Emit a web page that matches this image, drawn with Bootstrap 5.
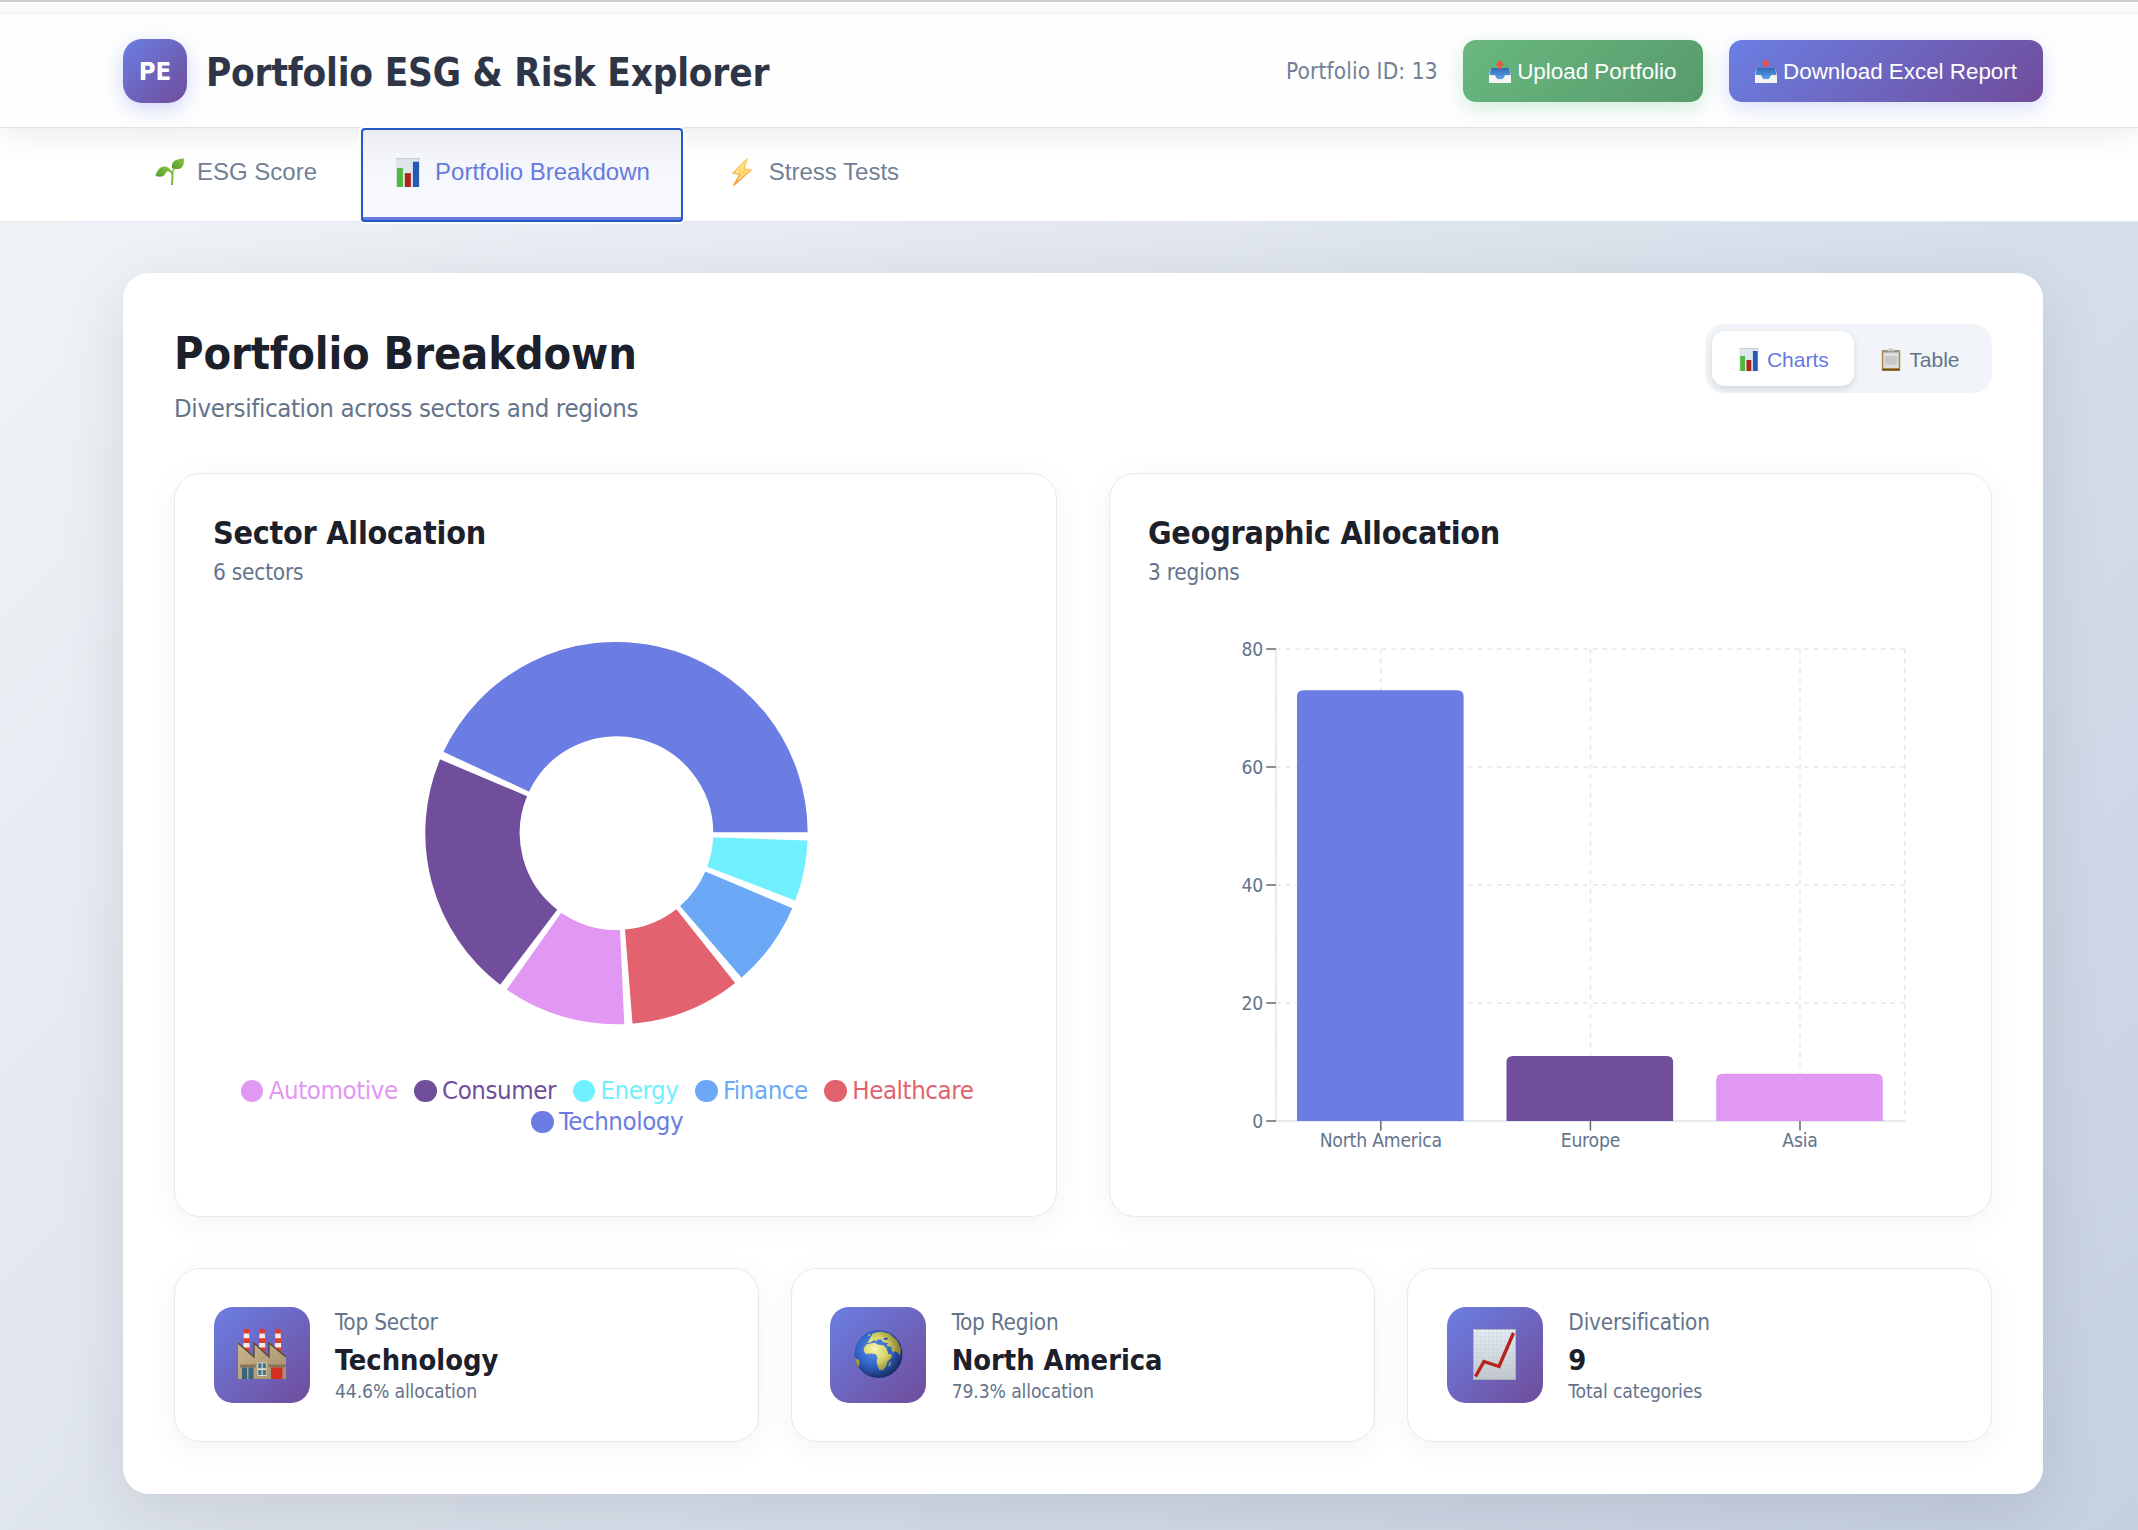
<!DOCTYPE html>
<html lang="en">
<head>
<meta charset="utf-8">
<meta name="viewport" content="width=device-width, initial-scale=1">
<title>Portfolio ESG &amp; Risk Explorer</title>
<link rel="stylesheet" href="https://cdn.jsdelivr.net/npm/bootstrap@5.3.0/dist/css/bootstrap.min.css">
<style>
  body{font-family:"DejaVu Sans Condensed","DejaVu Sans",sans-serif;font-stretch:condensed;letter-spacing:-.013em;color:#1b202b;min-height:1530px;background:linear-gradient(135deg,#f3f5f8 0%,#c5d0e1 100%);overflow:hidden}
  .shell{width:1920px;margin-left:123px}
  .edge-strip{height:15px;border-top:2px solid #ccc;background:linear-gradient(#fcfcfc,#f6f6f6)}
  .app-header{height:113px;background:#fefefe;border-bottom:1px solid #e0e2e4;box-shadow:0 3px 32px rgba(0,0,0,.1);clip-path:inset(0 0 -50px 0);position:relative;z-index:2}
  .logo-box{width:64px;height:64px;border-radius:19px;background:linear-gradient(135deg,#6b7fe3,#704c9a);color:#fff;font-size:25.6px;font-weight:700;letter-spacing:0;padding-top:1px;box-shadow:0 6px 20px rgba(102,126,234,.3)}
  .app-title{font-size:38.4px;line-height:46px;font-weight:700;color:#2d3546;letter-spacing:-.0055em;padding-top:3px;margin-left:19px}
  .pid{font-size:22.4px;color:#718096;letter-spacing:.006em;padding-top:1px}
  .ui,.btn{font-family:"Liberation Sans",Arial,sans-serif;letter-spacing:0}
  .act-btn{height:62px;border:0;border-radius:13px;padding:1px 26px 0 25px;font-size:22.4px;color:#fff;gap:5.5px;margin-left:26px}
  .act-btn:first-of-type{margin-left:25px}
  .btn-up{background:linear-gradient(135deg,#6ab880,#579b6b);box-shadow:0 6px 19px rgba(72,187,120,.25)}
  .btn-down{background:linear-gradient(135deg,#6b7fe3,#704c9a);box-shadow:0 6px 19px rgba(102,126,234,.25)}
  .tabs-bar{height:94px;background:#fff;border-bottom:1px solid #e2e6ec}
  .tab-btn{height:93px;padding:0 32px 5px;gap:12px;font-size:24px;color:#718096;margin-right:12px}
  .tab-btn.active{height:94px;padding:0 33px 1px 32px;color:#667ae0;background:linear-gradient(#ebecf2,#f4f5fb 30%,#f7f8fd 60%);border-bottom:5px solid #667ae0;border-radius:4px;outline:2.5px solid #2559c5;outline-offset:-2px;box-shadow:0 0 0 2px #fff;position:relative;z-index:3}
  .panel{margin-top:51px;height:1221px;border-radius:26px;background:#fff;padding:51px;box-shadow:0 16px 64px rgba(0,0,0,.1)}
  .panel-top{height:149px}
  .panel-top h2{font-size:44.8px;line-height:59px;font-weight:700;margin:0 0 6px;letter-spacing:-.003em}
  .panel-top p{font-size:25.6px;line-height:38.4px;color:#64748b;margin:0;letter-spacing:-.0145em}
  .toggle-box{height:69px;padding:7px;border-radius:19px;background:#f1f5f9}
  .toggle-box .btn{height:55px;border:0;border-radius:13px;padding:2px 25.5px 0 27px;font-size:21px;color:#64748b;gap:8px}
  .toggle-box .btn.active{background:#fff;color:#667ae6;box-shadow:0 3px 7px rgba(0,0,0,.12)}
  .soft-card{border:1px solid #e5e9f1;border-radius:26px;background:#fff;box-shadow:0 6px 32px rgba(0,0,0,.05)}
  .chart-card{width:883px;height:744px;padding:38px}
  .chart-card h3{font-size:32px;line-height:43px;font-weight:700;margin:0 0 1px;letter-spacing:-.008em}
  .chart-card p{font-size:22.4px;line-height:32px;color:#64748b;margin:0}
  .chart-card svg.plot{display:block;width:805px}
  .legend-row{font-size:25.6px;line-height:30.7px;letter-spacing:-.0165em}
  .legend-row span{margin-right:16.6px}
  .legend-row i{width:22.4px;height:22.4px;border-radius:50%;background:currentColor;margin-right:5.4px;margin-top:5px}
  .stats{margin-top:51px;gap:32px}
  .stat-card{flex:1 1 0;height:174px;padding:38px 38.500px}
  .stat-icon{width:96px;height:96px;border-radius:19px;background:linear-gradient(135deg,#6b7fe3,#704c9a);margin-right:25.5px}
  .stat-icon svg{margin:-2px 0 0 0}
  .stat-copy{margin-top:-3px}
  .stat-copy div:nth-child(1){font-size:22.4px;line-height:36px;color:#64748b}
  .stat-copy div:nth-child(2){font-size:28.8px;line-height:40px;font-weight:700;letter-spacing:-.001em}
  .stat-copy div:nth-child(3){font-size:19.2px;line-height:24px;color:#64748b;letter-spacing:-.007em}
  .axis{font-size:19.2px;fill:#64748b}
</style>
<script src="https://cdn.jsdelivr.net/npm/bootstrap@5.3.0/dist/js/bootstrap.bundle.min.js"></script>
</head>
<body>
<svg width="0" height="0" class="position-absolute">
  <defs>
    <linearGradient id="paper" x1="0" y1="0" x2="0" y2="1"><stop offset="0" stop-color="#e6eef8"/><stop offset="1" stop-color="#c3c9cd"/></linearGradient>
    <linearGradient id="leaf" x1="0" y1="1" x2="1" y2="0"><stop offset="0" stop-color="#4f9a2f"/><stop offset="1" stop-color="#8cc63f"/></linearGradient>
    <linearGradient id="trayblue" x1="0" y1="0" x2="0" y2="1"><stop offset="0" stop-color="#3169b5"/><stop offset="1" stop-color="#5da4ee"/></linearGradient>
    <linearGradient id="wall" x1="0" y1="0" x2="1" y2="1"><stop offset="0" stop-color="#cdb68b"/><stop offset="1" stop-color="#a38f70"/></linearGradient>
    <radialGradient id="sea" cx=".4" cy=".4" r=".62"><stop offset="0" stop-color="#5c95e6"/><stop offset=".6" stop-color="#2d5fc3"/><stop offset="1" stop-color="#1b2c66"/></radialGradient>
    <radialGradient id="land" gradientUnits="userSpaceOnUse" cx="21" cy="20" r="28"><stop offset="0" stop-color="#f6f7b4"/><stop offset=".5" stop-color="#d3cf62"/><stop offset="1" stop-color="#766f2e"/></radialGradient>
    <linearGradient id="bolt" x1="0" y1="0" x2="0" y2="1"><stop offset="0" stop-color="#ffd65b"/><stop offset="1" stop-color="#f49b3c"/></linearGradient>
    <symbol id="i-bars" viewBox="0 0 19 23"><path fill="#dde5ed" d="M0 0h19v23H0z"/><path fill="#c7d2d8" d="M0 0h19v1H0z"/><path fill="#52b83c" d="M.7 8h4.8v15H.7z"/><path fill="#ae251e" d="M7 12h4.8v11H7z"/><path fill="#2459b8" d="M13.4 3h4.8v20h-4.8z"/></symbol>
    <symbol id="i-tray-up" viewBox="0 0 24 24"><path fill="#e9e9e7" d="M1 14.500 3 8h18l2 6.500V23H1z"/><path fill="url(#trayblue)" d="M3 8h18l1.600 7h-5l-2.500 4h-6l-2.500-4h-5z"/><path fill="#f5f5f3" d="M1 15.500h6L9.500 20h5l2.500-4.500h6V23H1z"/><path fill="#e95244" d="m12 0 4.500 5.200h-2.800V9h-3.400V5.200H7.500z"/></symbol>
    <symbol id="i-tray-down" viewBox="0 0 24 24"><path fill="#e9e9e7" d="M1 14.500 3 8h18l2 6.500V23H1z"/><path fill="url(#trayblue)" d="M3 8h18l1.600 7h-5l-2.500 4h-6l-2.500-4h-5z"/><path fill="#f5f5f3" d="M1 15.500h6L9.500 20h5l2.500-4.500h6V23H1z"/><path fill="#e95244" d="M9.500 0h5l-.6 3H16l-4 5-4-5h2.100z"/></symbol>
    <symbol id="i-seed" viewBox="0 0 30 28"><path fill="none" stroke="#7fb53a" stroke-width="2" d="M13 12q5 1 4.500 7t-.5 8"/><path fill="none" stroke="#7fb53a" stroke-width="1.500" d="M17.500 16q0-4 3-7"/><path fill="url(#leaf)" d="M.5 18Q3 8 10 8.500q5 .5 5.500 5Q12 12 10 16T.5 18Z"/><path fill="url(#leaf)" d="M17 10q-1-6 4-8t8-1.500q.5 10-5.500 10.500-4 .3-6.500-1Z"/></symbol>
    <symbol id="i-bolt" viewBox="0 0 20 28"><path fill="#fff3b5" stroke="url(#bolt)" stroke-width="1.600" stroke-linejoin="round" d="M15 1 1.200 15.200l7 .8L2 27 18.800 12.200l-7-1.200Z"/><path fill="#ffd65b" d="M13 5 5 14l5 1-3 6 8.500-8-6-1z"/></symbol>
    <symbol id="i-clip" viewBox="0 0 19 23"><rect x=".3" y="2" width="18.400" height="21" rx="1.400" fill="#ad8540"/><path fill="#71542a" d="M.5 21h18v1.500h-18z"/><path fill="#dedede" d="M1.800 3.500h15.400V20H1.800z"/><path fill="#c8c8c8" d="M3.500 8h11.800v8.500H3.500z"/><path fill="#8e9092" d="M2.500 2.300h14v2.200h-14z"/><path fill="#c4c9cc" d="M6 1.800 9.500 0 13 1.800v1.400H6z"/></symbol>
    <symbol id="i-factory" viewBox="0 0 48 50">
      <g id="stacks"><path fill="#e5392c" d="M6 0h5l.8 22H5.200z"/><path fill="#f0ece8" d="M5.800 4.500h5.400l.2 4.700H5.600zM5.400 14h6.100l.2 4.500H5.300z"/></g>
      <use href="#stacks" x="15.700"/><use href="#stacks" x="31.500"/>
      <path fill="url(#wall)" d="M0 14 16 28V14l15 14V14l17 14v22H0z"/>
      <path fill="none" stroke="#5c4a39" stroke-width="1.400" d="m0 14 16 14V14l15 14V14l17 14"/>
      <path fill="#87765a" d="M2 35.500h16v3H2zM30.500 35.500h17v3h-17z"/><path fill="#39657f" d="M4 38.500h5V50H4zM10.500 38.500h5V50h-5z"/>
      <path fill="#e8dfc6" d="M19.500 33.500h9V47h-9z"/><path fill="#3d718d" d="M20.300 34.300h3.200v5h-3.200zM24.700 34.300h3.200v5h-3.200zM20.300 41h3.200v5h-3.200zM24.700 41h3.200v5h-3.200z"/><path fill="#d32f25" d="M33 38.500h11.500V50H33z"/>
    </symbol>
    <symbol id="i-globe" viewBox="0 0 50 50"><circle cx="25" cy="25" r="24.500" fill="url(#sea)"/><g fill="url(#land)"><path d="m10 19 3-4 8-1.500 4 2 5 .5 3 3 2 6 4 .5-1 3.500-4 4-1 4-3 4-4 .5-2-5-1-4 1-4-2-3.500-5-.5-5 .5-2-3z"/><path d="m17 8 2-4 8-2 9 2 8 7 4 9-1 7-2-3-3-2-2 2-3-6-4-2 2-2-5-1-3-3-3 2-4-1-3 2-3 1 1-3z"/><path d="m1 29 4 2 1 4-2 4-2-5zM36 34l2-1-1 4-2 1zM14 7l2-3 1 2z"/></g><path fill="#2d5fc3" d="m30 9 4-1 1 2-4 1zM36 16l3 3-1 1zM23 11l2-1 1 2z"/></symbol>
    <symbol id="i-trend" viewBox="0 0 43 51"><path fill="url(#paper)" d="M0 0h43v51H0z"/><path stroke="#a9b6c2" stroke-width=".5" opacity=".4" d="M4 0v51M8 0v51M12 0v51M16 0v51M20 0v51M24 0v51M28 0v51M32 0v51M36 0v51M40 0v51M0 4h43M0 8h43M0 12h43M0 16h43M0 20h43M0 24h43M0 28h43M0 32h43M0 36h43M0 40h43M0 44h43M0 48h43"/><path fill="none" stroke="#9ba4aa" stroke-width=".8" d="M.4.400h42.200v50.200H.4z"/><path fill="none" stroke="#b5241c" stroke-width="3.400" d="m2.500 47.500 8.500-15 15 5L40.500 4"/></symbol>
  </defs>
</svg>

<div class="edge-strip"></div>
<header class="app-header">
  <div class="shell h-100 d-flex align-items-center">
    <div class="logo-box d-flex align-items-center justify-content-center">PE</div>
    <div class="app-title">Portfolio ESG &amp; Risk Explorer</div>
    <span class="pid ms-auto">Portfolio ID: 13</span>
    <button class="btn act-btn btn-up d-flex align-items-center"><svg width="24" height="24"><use href="#i-tray-up"/></svg>Upload Portfolio</button>
    <button class="btn act-btn btn-down d-flex align-items-center"><svg width="24" height="24"><use href="#i-tray-down"/></svg>Download Excel Report</button>
  </div>
</header>
<nav class="tabs-bar ui">
  <div class="shell d-flex">
    <div class="tab-btn d-flex align-items-center"><svg width="30" height="28"><use href="#i-seed"/></svg>ESG Score</div>
    <div class="tab-btn active d-flex align-items-center"><svg width="30" height="29"><use href="#i-bars"/></svg>Portfolio Breakdown</div>
    <div class="tab-btn d-flex align-items-center"><svg width="30" height="28"><use href="#i-bolt"/></svg>Stress Tests</div>
  </div>
</nav>

<main class="shell panel">
  <div class="panel-top d-flex justify-content-between align-items-start">
    <div><h2>Portfolio Breakdown</h2><p>Diversification across sectors and regions</p></div>
    <div class="toggle-box d-flex">
      <button class="btn active d-flex align-items-center"><svg width="20" height="23"><use href="#i-bars"/></svg>Charts</button>
      <button class="btn d-flex align-items-center"><svg width="20" height="23"><use href="#i-clip"/></svg>Table</button>
    </div>
  </div>

  <div class="d-flex justify-content-between">
    <section class="soft-card chart-card">
      <h3>Sector Allocation</h3><p>6 sectors</p>
      <svg class="plot" id="donut" height="487" viewBox="213 588 805 487"></svg>
      <div class="legend-row d-flex flex-wrap justify-content-center">
        <span class="d-flex" style="color:#e198f3"><i></i>Automotive</span>
        <span class="d-flex" style="color:#704e9c"><i></i>Consumer</span>
        <span class="d-flex" style="color:#70f0ff"><i></i>Energy</span>
        <span class="d-flex" style="color:#6ba9f7"><i></i>Finance</span>
        <span class="d-flex" style="color:#e2626f"><i></i>Healthcare</span>
        <span class="d-flex" style="color:#6b7de2"><i></i>Technology</span>
      </div>
    </section>
    <section class="soft-card chart-card">
      <h3>Geographic Allocation</h3><p>3 regions</p>
      <svg class="plot" height="590" viewBox="1148 588 805 590">
        <g stroke="#e4e8ee" stroke-width="1.600" stroke-dasharray="4.800 4.800">
          <path d="M1276 649h629M1276 767h629M1276 885h629M1276 1003h629M1276 1121h629"/>
          <path d="M1380.800 649v472M1590.400 649v472M1800 649v472M1904.800 649v472M1275.800 649v472"/>
        </g>
        <path stroke="#e4e8ee" stroke-width="1.600" fill="none" d="M1275.800 649v472h629"/>
        <path fill="#6b7de2" d="M1297 1121V696.700q0-6.400 6.400-6.400h153.800q6.400 0 6.400 6.400V1121z"/>
        <path fill="#704e9c" d="M1506.500 1121v-58.500q0-6.400 6.400-6.400h153.800q6.400 0 6.400 6.400v58.500z"/>
        <path fill="#e198f3" d="M1716.200 1121v-40.800q0-6.400 6.400-6.400h153.800q6.400 0 6.400 6.400v40.800z"/>
        <path stroke="#666" stroke-width="1.500" d="M1266.300 649h9.600M1266.300 767h9.600M1266.300 885h9.600M1266.300 1003h9.600M1266.300 1121h9.600M1380.800 1121v9.600M1590.400 1121v9.600M1800 1121v9.600"/>
        <g class="axis" text-anchor="end"><text x="1263" y="656">80</text><text x="1263" y="774">60</text><text x="1263" y="892">40</text><text x="1263" y="1010">20</text><text x="1263" y="1128">0</text></g>
        <g class="axis" text-anchor="middle"><text x="1380.800" y="1147">North America</text><text x="1590.400" y="1147">Europe</text><text x="1800" y="1147">Asia</text></g>
      </svg>
    </section>
  </div>

  <div class="stats d-flex">
    <div class="soft-card stat-card d-flex align-items-start">
      <div class="stat-icon d-flex align-items-center justify-content-center"><svg width="48" height="50"><use href="#i-factory"/></svg></div>
      <div class="stat-copy"><div>Top Sector</div><div>Technology</div><div>44.6% allocation</div></div>
    </div>
    <div class="soft-card stat-card d-flex align-items-start">
      <div class="stat-icon d-flex align-items-center justify-content-center"><svg width="49" height="50"><use href="#i-globe"/></svg></div>
      <div class="stat-copy"><div>Top Region</div><div>North America</div><div>79.3% allocation</div></div>
    </div>
    <div class="soft-card stat-card d-flex align-items-start">
      <div class="stat-icon d-flex align-items-center justify-content-center"><svg width="43" height="51"><use href="#i-trend"/></svg></div>
      <div class="stat-copy"><div>Diversification</div><div>9</div><div>Total categories</div></div>
    </div>
  </div>
</main>
<script>
  // Donut slices run counter-clockwise from 3 o'clock with a 2 degree gap.
  const slices = [[41,'#6b7de2'],[20,'#704e9c'],[10,'#e198f3'],[9,'#e2626f'],[7,'#6ba9f7'],[5,'#70f0ff']];
  const cx = 616.5, cy = 833.1, R = 192, r = 96, gap = 2;
  const total = slices.reduce((s, d) => s + d[0], 0);
  const pt = (rad, deg) => (cx + rad * Math.cos(deg * Math.PI / 180)).toFixed(2) + ' ' + (cy - rad * Math.sin(deg * Math.PI / 180)).toFixed(2);
  let a = 0, out = '';
  for (const [v, c] of slices) {
    const b = a + v / total * (360 - gap * slices.length);
    out += `<path fill="${c}" stroke="#fff" stroke-width="1.6" d="M${pt(R, a)}A${R} ${R} 0 0 0 ${pt(R, b)}L${pt(r, b)}A${r} ${r} 0 0 1 ${pt(r, a)}Z"/>`;
    a = b + gap;
  }
  document.getElementById('donut').innerHTML = out;
</script>
</body>
</html>
